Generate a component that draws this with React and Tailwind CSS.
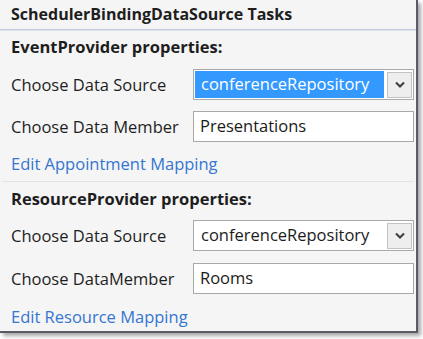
import React from "react";

const FONT = { fontFamily: '"Open Sans", "Noto Sans", sans-serif' };

function Chevron() {
  return (
    <svg width="10" height="7" viewBox="0 0 10 7">
      <path d="M1 1.5 L5 5.5 L9 1.5" fill="none" stroke="#3c3c3c" strokeWidth="2" />
    </svg>
  );
}

function ComboBox({ value, selected, className = "" }) {
  return (
    <div className={`flex items-center w-[221px] h-[31px] border border-[#a9a9a9] bg-white p-[1px] ${className}`}>
      <div
        className={`flex-1 h-full flex items-center pl-[6px] text-[16.5px] ${
          selected ? "bg-[#3399ff] text-white" : "text-[#1b1b1b]"
        }`}
      >
        {value}
      </div>
      <div className="ml-[3px] w-[25px] h-[26px] flex items-center justify-center border border-[#c3c3c3] bg-[#eeeeee]">
        <Chevron />
      </div>
    </div>
  );
}

function TextBox({ value }) {
  return (
    <div className="flex items-center w-[221px] h-[31px] border border-[#a9a9a9] bg-white pl-[6px] text-[16.5px] text-[#1b1b1b]">
      {value}
    </div>
  );
}

function Row({ label, children, className = "" }) {
  return (
    <div className={`flex items-center pl-[11px] ${className}`}>
      <span className="w-[182px] text-[16.5px] text-[#1e1e1e] leading-[20px]">{label}</span>
      {children}
    </div>
  );
}

function Title({ children, className = "" }) {
  return (
    <div className={`pl-[11px] text-[16.5px] font-bold text-[#1e1e1e] leading-[20px] ${className}`}>
      {children}
    </div>
  );
}

function Link({ children, className = "" }) {
  return (
    <div className={`pl-[11px] text-[16.5px] text-[#3476d2] leading-[20px] ${className}`}>{children}</div>
  );
}

export default function App() {
  return (
    <div className="w-[423px] h-[339px] bg-white" style={FONT}>
      <div className="w-[418px] h-[333px] bg-[#f5f5f5] border-r-2 border-b-2 border-[#5a5a66] shadow-[3px_3px_4px_rgba(0,0,0,0.35)] flex flex-col">
        <div className="h-[29px] pt-[4px] pl-[11px] text-[16px] font-bold text-[#1e1e1e] leading-[20px]">
          SchedulerBindingDataSource Tasks
        </div>
        <div className="h-[1px] bg-[#c3cada]" />
        <div className="h-[1px] bg-[#dfe4ee]" />

        <Title className="mt-[6px]">EventProvider properties:</Title>
        <Row label="Choose Data Source" className="mt-[12px]">
          <ComboBox value="conferenceRepository" selected />
        </Row>
        <Row label="Choose Data Member" className="mt-[11px]">
          <TextBox value="Presentations" />
        </Row>
        <Link className="mt-[12px]">Edit Appointment Mapping</Link>

        <div className="mt-[7px] mx-[2px] h-[1px] bg-[#e3e3e3]" />

        <Title className="mt-[7px]">ResourceProvider properties:</Title>
        <Row label="Choose Data Source" className="mt-[11px]">
          <ComboBox value="conferenceRepository" />
        </Row>
        <Row label="Choose DataMember" className="mt-[12px]">
          <TextBox value="Rooms" />
        </Row>
        <Link className="mt-[13px]">Edit Resource Mapping</Link>
      </div>
    </div>
  );
}
